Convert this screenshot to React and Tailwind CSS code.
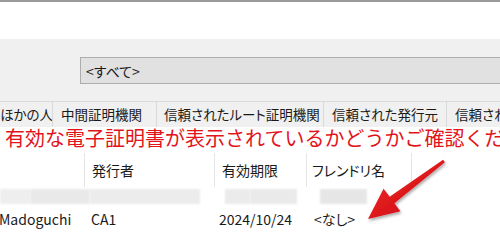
import React from 'react';

const tabs = [
  { label: 'ほかの人', w: 'w-[53px]', pl: 'pl-0' },
  { label: '中間証明機関', w: 'w-[104px]', pl: 'pl-[8px]' },
  { label: '信頼されたルート証明機関', w: 'w-[167px]', pl: 'pl-[7px]' },
  { label: '信頼された発行元', w: 'w-[123px]', pl: 'pl-[8px]' },
  { label: '信頼された発行元', w: 'w-[80px]', pl: 'pl-[8px]' },
];

const Arrow = () => (
  <svg className="absolute left-0 top-0" width="500" height="245" viewBox="0 0 500 245">
    <defs>
      <linearGradient id="arrowFill" x1="0" y1="0" x2="1" y2="1">
        <stop offset="0" stopColor="#f3292b" />
        <stop offset="1" stopColor="#c80a10" />
      </linearGradient>
      <filter id="arrowShadow" x="-20%" y="-20%" width="140%" height="140%">
        <feDropShadow dx="1" dy="2" stdDeviation="1.5" floodColor="#000" floodOpacity="0.35" />
      </filter>
    </defs>
    <path
      d="M443.1 159.8 L444.9 162.2 L394.4 203.2 L400.4 211.2 L368 219 L383.6 188.8 L389.6 196.8 Z"
      fill="url(#arrowFill)"
      filter="url(#arrowShadow)"
    />
  </svg>
);

export default function App() {
  return (
    <div
      className="relative w-[500px] h-[245px] overflow-hidden bg-white text-[#1a1a1a] [font-feature-settings:'palt']"
      style={{ fontFamily: '"Noto Sans CJK JP", "Noto Sans", sans-serif' }}
    >
      {/* window top edge */}
      <div className="h-[2px] bg-[#9a9a9a]" />
      <div className="h-[37px] bg-white" />

      {/* purpose dropdown */}
      <div className="h-[62px] bg-[#f0f0f0] pl-[80px] pt-[18px]">
        <div className="h-[27px] w-[440px] border border-[#adadad] bg-[#e1e1e1] pl-[5px] flex items-center text-[14px] leading-none">
          &lt;すべて&gt;
        </div>
      </div>

      {/* tabs */}
      <div className="flex h-[26px] border-t border-[#d9d9d9] bg-[#f0f0f0] whitespace-nowrap">
        {tabs.map((t, i) => (
          <div
            key={i}
            className={`${t.w} ${t.pl} shrink-0 overflow-hidden border-r border-[#d9d9d9] flex items-center text-[13.5px] leading-none`}
          >
            {t.label}
          </div>
        ))}
      </div>

      {/* caption */}
      <div className="h-[23px] bg-white overflow-hidden whitespace-nowrap">
        <div
          className="pl-[5px] text-[20px] leading-[22px] text-[#e3131b] [font-feature-settings:normal]"
          style={{ paintOrder: 'stroke', WebkitTextStroke: '3px #fff' }}
        >
          有効な電子証明書が表示されているかどうかご確認ください
        </div>
      </div>

      {/* list header */}
      <div className="flex h-[34px] mt-[3px] text-[14px] leading-none whitespace-nowrap">
        <div className="w-[85px] shrink-0 border-r border-[#e5e5e5]" />
        <div className="w-[130px] shrink-0 border-r border-[#e5e5e5] pl-[7px] flex items-center">発行者</div>
        <div className="w-[92px] shrink-0 border-r border-[#e5e5e5] pl-[7px] flex items-center">有効期限</div>
        <div className="w-[105px] shrink-0 border-r border-[#e5e5e5] pl-[5px] flex items-center">フレンドリ名</div>
      </div>

      {/* blurred row */}
      <div className="flex h-[15px] mt-[2px]">
        <div className="w-[30px] h-full bg-[#eeeeee] blur-[1px]" />
        <div className="w-[60px] h-full bg-[#e9e9e9] blur-[1px]" />
        <div className="w-[110px] h-full bg-[#ececec] blur-[1px]" />
        <div className="w-[25px]" />
        <div className="w-[25px] h-full bg-[#ebebeb] blur-[1px]" />
        <div className="w-[47px] h-full bg-[#eaeaea] blur-[1px]" />
        <div className="w-[23px]" />
        <div className="w-[47px] h-full bg-[#e6e6e6] blur-[1px]" />
      </div>

      {/* data row */}
      <div className="flex h-[30px] items-center text-[14px] leading-none whitespace-nowrap">
        <div className="w-[85px] shrink-0 -ml-[1px]">Madoguchi</div>
        <div className="w-[130px] shrink-0 pl-[7px]">CA1</div>
        <div className="w-[92px] shrink-0 pl-[5px]">2024/10/24</div>
        <div className="shrink-0 pl-[8px]">&lt;なし&gt;</div>
      </div>

      <Arrow />
    </div>
  );
}
